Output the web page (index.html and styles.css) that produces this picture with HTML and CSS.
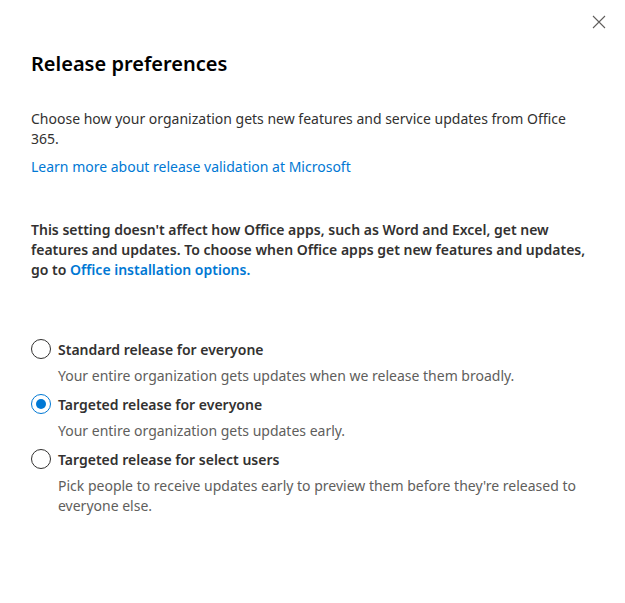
FILE: index.html
```html
<!doctype html>
<html lang="en">

<head>
	<meta charset="utf-8">
	<title>Release preferences</title>
	<link rel="stylesheet" href="styles.css">
</head>

<body>
	<div id="panel">
		<div class="top">
			<button class="close" aria-label="Close">
				<svg width="14" height="14" viewBox="0 0 14 14"><path d="M1 1 L13 13 M13 1 L1 13" stroke="#605e5c" stroke-width="1.1" fill="none" /></svg>
			</button>
		</div>
		<h1>Release preferences</h1>
		<p class="intro">Choose how your organization gets new features and service updates from Office 365.</p>
		<a class="learn" href="#">Learn more about release validation at Microsoft</a>
		<p class="note">This setting doesn't affect how Office apps, such as Word and Excel, get new features and updates. To choose when Office apps get new features and updates, go to <a class="inline" href="#">Office installation options.</a></p>
		<div class="options">
			<label class="option">
				<span class="row"><input type="radio" name="release"><span class="dot"></span>Standard release for everyone</span>
				<span class="desc">Your entire organization gets updates when we release them broadly.</span>
			</label>
			<label class="option">
				<span class="row"><input type="radio" name="release" checked><span class="dot"></span>Targeted release for everyone</span>
				<span class="desc">Your entire organization gets updates early.</span>
			</label>
			<label class="option">
				<span class="row"><input type="radio" name="release"><span class="dot"></span>Targeted release for select users</span>
				<span class="desc">Pick people to receive updates early to preview them before they're released to everyone else.</span>
			</label>
		</div>
	</div>
</body>

</html>
```

FILE: styles.css
```css
html {
	box-sizing: border-box;
	font-size: 14px;
	font-family: "Noto Sans", "Open Sans", sans-serif;
	color: #323130;
}

*,
*:before,
*:after {
	box-sizing: inherit;
}

body,
h1,
p {
	margin: 0;
	padding: 0;
}

body {
	background: #fff;
}

#panel {
	width: 625px;
	height: 603px;
	padding: 0 31px;
}

.top {
	display: flex;
	justify-content: flex-end;
	padding-top: 12px;
	margin-right: -15px;
}

.close {
	width: 20px;
	height: 20px;
	padding: 0;
	border: 0;
	background: none;
	display: flex;
	align-items: center;
	justify-content: center;
	cursor: pointer;
}

h1 {
	margin-top: 18px;
	font-size: 20px;
	line-height: 28px;
	font-weight: 600;
	color: #000;
}

.intro {
	margin-top: 31px;
	line-height: 20px;
}

a {
	color: #0078d4;
	text-decoration: none;
}

.learn {
	display: block;
	margin-top: 8px;
	line-height: 20px;
}

.note {
	margin-top: 43px;
	line-height: 20px;
	font-weight: 600;
}

.note .inline {
	display: inline-block;
	line-height: 20px;
}

.options {
	margin-top: 59px;
	display: flex;
	flex-direction: column;
	gap: 8px;
}

.option {
	display: flex;
	flex-direction: column;
	gap: 7px;
	cursor: pointer;
}

.row {
	display: flex;
	align-items: center;
	height: 20px;
	font-weight: 600;
}

.row input {
	display: none;
}

.dot {
	width: 20px;
	height: 20px;
	border: 1px solid #323130;
	border-radius: 50%;
	margin-right: 7px;
	flex-shrink: 0;
	display: flex;
	align-items: center;
	justify-content: center;
}

.row input:checked+.dot {
	border-color: #0078d4;
}

.row input:checked+.dot::after {
	content: "";
	width: 10px;
	height: 10px;
	border-radius: 50%;
	background: #0078d4;
}

.desc {
	padding-left: 27px;
	line-height: 20px;
	color: #605e5c;
}
```
